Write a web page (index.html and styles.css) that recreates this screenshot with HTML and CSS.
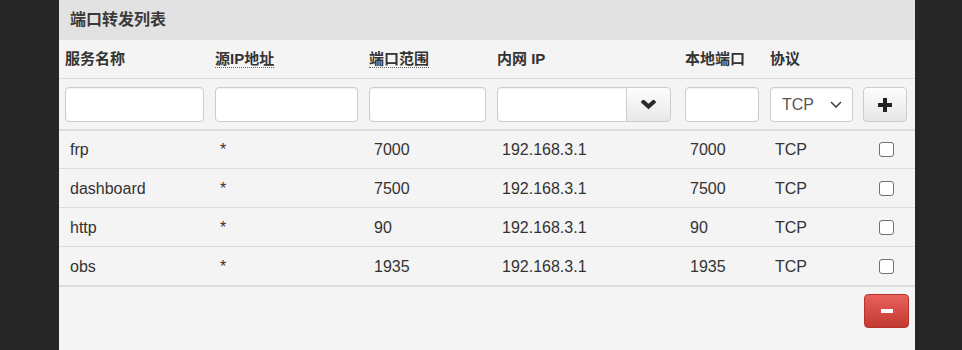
FILE: index.html
```html
<!DOCTYPE html>
<html lang="zh-CN">
<head>
  <meta charset="UTF-8" />
  <title>端口转发</title>
  <link rel="stylesheet" href="styles.css">
</head>
<body>
  <div class="panel">
    <div class="panel-title">端口转发列表</div>

    <table class="fw-table">
      <colgroup>
        <col class="c-name">
        <col class="c-src">
        <col class="c-range">
        <col class="c-ip">
        <col class="c-port">
        <col class="c-proto">
        <col class="c-act">
      </colgroup>
      <thead>
        <tr class="head-row">
          <th>服务名称</th>
          <th><span class="hint">源IP地址</span></th>
          <th><span class="hint">端口范围</span></th>
          <th>内网 IP</th>
          <th>本地端口</th>
          <th>协议</th>
          <th></th>
        </tr>
        <tr class="input-row">
          <td><input type="text" class="field"></td>
          <td><input type="text" class="field"></td>
          <td><input type="text" class="field"></td>
          <td>
            <div class="input-group">
              <input type="text" class="field">
              <button class="addon">
                <svg width="16" height="10" viewBox="0 0 16 10"><polyline points="2.5,2 7.5,6.5 12.5,2" fill="none" stroke="#2b2b2b" stroke-width="4" stroke-linecap="square"/></svg>
              </button>
            </div>
          </td>
          <td><input type="text" class="field"></td>
          <td>
            <div class="select-wrap">
              <select class="field proto">
                <option>TCP</option>
                <option>UDP</option>
              </select>
              <svg class="caret" width="12" height="7" viewBox="0 0 12 7"><polyline points="1,1 6,6 11,1" fill="none" stroke="#444" stroke-width="1.6"/></svg>
            </div>
          </td>
          <td>
            <button class="btn-add">
              <svg width="14" height="14" viewBox="0 0 14 14"><path d="M5 0h4v5h5v4H9v5H5V9H0V5h5z" fill="#222"/></svg>
            </button>
          </td>
        </tr>
      </thead>
      <tbody id="rules"></tbody>
    </table>

    <div class="actions">
      <button class="btn-del"><span class="bar"></span></button>
    </div>
  </div>

  <script>
    // forwarding rules
    const rules = [
      { name: "frp", src: "*", range: "7000", ip: "192.168.3.1", port: "7000", proto: "TCP" },
      { name: "dashboard", src: "*", range: "7500", ip: "192.168.3.1", port: "7500", proto: "TCP" },
      { name: "http", src: "*", range: "90", ip: "192.168.3.1", port: "90", proto: "TCP" },
      { name: "obs", src: "*", range: "1935", ip: "192.168.3.1", port: "1935", proto: "TCP" }
    ];

    const tbody = document.getElementById("rules");
    rules.forEach(r => {
      const tr = document.createElement("tr");
      tr.innerHTML = `<td>${r.name}</td><td>${r.src}</td><td>${r.range}</td><td>${r.ip}</td><td>${r.port}</td><td>${r.proto}</td><td class="chk"><input type="checkbox"></td>`;
      tbody.appendChild(tr);
    });
  </script>
</body>
</html>
```

FILE: styles.css
```css
body {
  margin: 0;
  background-color: #262626;
  font-family: 'Liberation Sans', Arial, 'Noto Sans CJK SC', sans-serif;
  color: #333;
}

.panel {
  width: 856px;
  height: 350px;
  margin-left: 59px;
  background-color: #f4f4f4;
}

.panel-title {
  height: 40px;
  line-height: 40px;
  padding-left: 11px;
  background-color: #e2e2e2;
  font-size: 16px;
  font-weight: bold;
  color: #3a3a3a;
}

.fw-table {
  width: 856px;
  table-layout: fixed;
  border-collapse: collapse;
}

.c-name { width: 150px; }
.c-src { width: 154px; }
.c-range { width: 128px; }
.c-ip { width: 188px; }
.c-port { width: 85px; }
.c-proto { width: 94px; }
.c-act { width: 57px; }

.head-row th {
  height: 35px;
  padding: 0 5px 3px 6px;
  text-align: left;
  font-size: 15px;
  font-weight: bold;
  color: #333;
  border-bottom: 1px solid #dcdcdc;
}

.hint {
  border-bottom: 1px dotted #666;
}

.input-row td {
  height: 49px;
  padding: 1px 5px 0 6px;
  border-bottom: 2px solid #dcdcdc;
}

.field {
  box-sizing: border-box;
  width: 100%;
  height: 35px;
  border: 1px solid #ccc;
  border-radius: 4px;
  background: #fff;
  box-shadow: inset 0 1px 1px rgba(0,0,0,0.06);
  font-family: inherit;
  font-size: 16px;
  color: #555;
  padding: 0 10px;
  margin: 0;
  display: block;
}

.input-group {
  display: flex;
  width: 174px;
}

.input-group .field {
  flex: 1;
  min-width: 0;
  border-radius: 4px 0 0 4px;
}

.addon {
  width: 45px;
  height: 35px;
  margin: 0 0 0 -1px;
  border: 1px solid #ccc;
  border-radius: 0 4px 4px 0;
  background: linear-gradient(#fdfdfd, #e8e8e8);
  display: flex;
  align-items: center;
  justify-content: center;
  padding: 0;
}

.select-wrap {
  position: relative;
}

.proto {
  appearance: none;
  -webkit-appearance: none;
  padding-left: 11px;
}

.caret {
  position: absolute;
  right: 11px;
  top: 14px;
  pointer-events: none;
}

.btn-add {
  width: 44px;
  height: 35px;
  margin-left: -1px;
  border: 1px solid #ccc;
  border-radius: 4px;
  background: linear-gradient(#fdfdfd, #e6e6e6);
  display: flex;
  align-items: center;
  justify-content: center;
  padding: 0;
}

tbody td {
  height: 37px;
  padding: 1px 5px 0 11px;
  font-size: 16px;
  color: #333;
  border-bottom: 1px solid #dcdcdc;
}

tbody tr:first-child td {
  height: 36px;
}

tbody tr:last-child td {
  border-bottom: 2px solid #dcdcdc;
}

tbody td.chk {
  padding: 0;
  text-align: center;
}

.chk input {
  appearance: none;
  -webkit-appearance: none;
  display: block;
  width: 15px;
  height: 15px;
  margin: 0 auto;
  border: 1.5px solid #707070;
  border-radius: 3px;
  background: #fff;
}

.actions {
  display: flex;
  justify-content: flex-end;
  padding: 7px 6px 0 0;
}

.btn-del {
  width: 45px;
  height: 34px;
  border: 1px solid #b8332c;
  border-radius: 4px;
  background: linear-gradient(#e8615b, #c33a32);
  display: flex;
  align-items: center;
  justify-content: center;
  padding: 0;
}

.btn-del .bar {
  width: 12px;
  height: 4px;
  background: #fff;
}
```
